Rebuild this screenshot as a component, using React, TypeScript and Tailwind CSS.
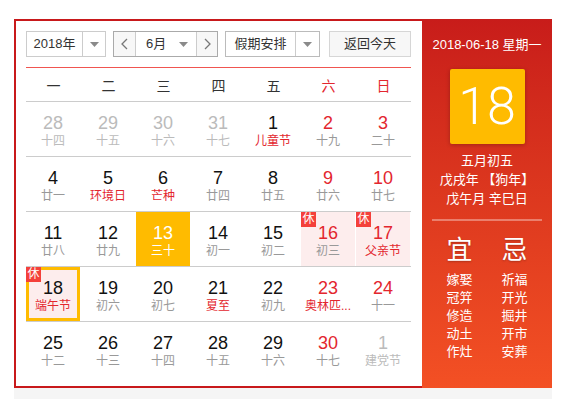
import React from "react";

type Day = {
  d: number;
  l: string;
  muted?: boolean; // 非当月
  red?: boolean; // 周末/节假日数字
  lred?: boolean; // 农历/节日红字
  rest?: boolean; // 休
  today?: boolean;
  sel?: boolean;
};

const weeks: Day[][] = [
  [
    { d: 28, l: "十四", muted: true },
    { d: 29, l: "十五", muted: true },
    { d: 30, l: "十六", muted: true },
    { d: 31, l: "十七", muted: true },
    { d: 1, l: "儿童节", lred: true },
    { d: 2, l: "十九", red: true },
    { d: 3, l: "二十", red: true },
  ],
  [
    { d: 4, l: "廿一" },
    { d: 5, l: "环境日", lred: true },
    { d: 6, l: "芒种", lred: true },
    { d: 7, l: "廿四" },
    { d: 8, l: "廿五" },
    { d: 9, l: "廿六", red: true },
    { d: 10, l: "廿七", red: true },
  ],
  [
    { d: 11, l: "廿八" },
    { d: 12, l: "廿九" },
    { d: 13, l: "三十", sel: true },
    { d: 14, l: "初一" },
    { d: 15, l: "初二" },
    { d: 16, l: "初三", red: true, rest: true },
    { d: 17, l: "父亲节", red: true, lred: true, rest: true },
  ],
  [
    { d: 18, l: "端午节", lred: true, rest: true, today: true },
    { d: 19, l: "初六" },
    { d: 20, l: "初七" },
    { d: 21, l: "夏至", lred: true },
    { d: 22, l: "初九" },
    { d: 23, l: "奥林匹...", red: true, lred: true },
    { d: 24, l: "十一", red: true },
  ],
  [
    { d: 25, l: "十二" },
    { d: 26, l: "十三" },
    { d: 27, l: "十四" },
    { d: 28, l: "十五" },
    { d: 29, l: "十六" },
    { d: 30, l: "十七", red: true },
    { d: 1, l: "建党节", muted: true },
  ],
];

const yi = ["嫁娶", "冠笄", "修造", "动土", "作灶"];
const ji = ["祈福", "开光", "掘井", "开市", "安葬"];

function Caret() {
  return (
    <svg width="9" height="5" viewBox="0 0 9 5">
      <path d="M0 0 L9 0 L4.5 5 Z" fill="#8a8a8a" />
    </svg>
  );
}

function Chevron({ right }: { right?: boolean }) {
  return (
    <svg width="7" height="12" viewBox="0 0 7 12">
      <path
        d={right ? "M1 1 L6 6 L1 11" : "M6 1 L1 6 L6 11"}
        fill="none"
        stroke="#777"
        strokeWidth="1.3"
      />
    </svg>
  );
}

function Cell({ day }: { day: Day }) {
  let bg = "";
  if (day.sel) bg = "bg-[#ffbb00]";
  else if (day.rest) bg = "bg-[#fdeded]";

  let numColor = "text-[#111]";
  if (day.muted) numColor = "text-[#bbb]";
  else if (day.sel) numColor = "text-white";
  else if (day.red) numColor = "text-[#e3262e]";

  let lunarColor = "text-[#999]";
  if (day.muted) lunarColor = "text-[#bbb]";
  else if (day.sel) lunarColor = "text-white";
  else if (day.lred) lunarColor = "text-[#e3262e]";

  return (
    <div className="w-[55px] h-[54px] pr-[1px]">
      <div
        className={`relative h-full flex flex-col items-center ${bg} ${
          day.today ? "border-[3px] border-[#ffbb00] pt-[8px]" : "pt-[11px]"
        }`}
      >
        {day.rest && (
          <div
            className={`absolute ${
              day.today ? "-left-[3px] -top-[3px]" : "left-0 top-0"
            } w-[15px] h-[15px] bg-[#f4403a] text-white text-[12px] leading-[15px] text-center`}
          >
            休
          </div>
        )}
        <div className={`text-[18px] leading-[20px] ${numColor}`}>{day.d}</div>
        <div className={`text-[12px] leading-[16px] whitespace-nowrap ${lunarColor}`}>
          {day.l}
        </div>
      </div>
    </div>
  );
}

export default function App() {
  return (
    <div
      className="w-[569px] h-[399px] bg-white pt-[19px] pl-[14px]"
      style={{ fontFamily: '"Liberation Sans", "Noto Sans CJK SC", sans-serif' }}
    >
      <div className="flex w-[538px] h-[369px]">
        {/* 左: 日历 */}
        <div className="w-[408px] h-full border-2 border-r-0 border-[#c8191b] bg-white px-[10px] pt-[10px]">
          {/* 工具栏 */}
          <div className="flex h-[26px] text-[13px] text-[#333]">
            <div className="flex w-[80px] border border-[#ccc]">
              <div className="w-[55px] flex items-center justify-center">2018年</div>
              <div className="flex-1 border-l border-[#ccc] flex items-center justify-center">
                <Caret />
              </div>
            </div>
            <div className="flex w-[105px] ml-[7px] border border-[#aaa]">
              <div className="w-[22px] bg-[#f7f7f7] border-r border-[#ccc] flex items-center justify-center">
                <Chevron />
              </div>
              <div className="w-[60px] flex items-center pl-[10px] gap-[13px]">
                <span>6月</span>
                <Caret />
              </div>
              <div className="flex-1 bg-[#f7f7f7] border-l border-[#ccc] flex items-center justify-center">
                <Chevron right />
              </div>
            </div>
            <div className="flex w-[95px] ml-[7px] border border-[#bbb]">
              <div className="w-[69px] flex items-center justify-center">假期安排</div>
              <div className="flex-1 border-l border-[#ccc] flex items-center justify-center">
                <Caret />
              </div>
            </div>
            <div className="w-[82px] ml-[9px] border border-[#d6d6d6] bg-[#f7f7f7] flex items-center justify-center">
              返回今天
            </div>
          </div>

          <div className="mt-[10px] h-px w-[385px] bg-[#f05550]" />

          {/* 星期 */}
          <div className="grid grid-cols-7 w-[385px] h-[34px] border-b border-[#ccc] text-[14px] text-[#333]">
            {["一", "二", "三", "四", "五", "六", "日"].map((w, i) => (
              <div
                key={w}
                className={`flex items-center justify-center pt-[3px] ${
                  i >= 5 ? "text-[#e3262e]" : ""
                }`}
              >
                {w}
              </div>
            ))}
          </div>

          {/* 日期 */}
          <div className="w-[385px]" style={{ fontFamily: '"Liberation Sans", "Noto Sans CJK SC", sans-serif' }}>
            {weeks.map((wk, i) => (
              <div
                key={i}
                className={`flex ${i < weeks.length - 1 ? "border-b border-[#ccc]" : ""}`}
              >
                {wk.map((d, j) => (
                  <Cell key={j} day={d} />
                ))}
              </div>
            ))}
          </div>
        </div>

        {/* 右: 今日详情 */}
        <div className="w-[130px] h-full bg-gradient-to-b from-[#c81c1a] to-[#f35024] text-white flex flex-col items-center">
          <div className="mt-[18px] text-[13px] leading-[16px]">2018-06-18 星期一</div>
          <div className="mt-[16px] w-[75px] h-[75px] rounded-[2px] bg-[#ffbb00] shadow-[0_1px_4px_rgba(0,0,0,0.25)] flex items-center justify-center">
            <span
              className="text-[52px] font-light leading-none"
              style={{ fontFamily: 'Roboto, "Liberation Sans", sans-serif' }}
            >
              18
            </span>
          </div>
          <div className="mt-[7px] text-[13px] leading-[19px] text-center">
            <div>五月初五</div>
            <div>戊戌年 【狗年】</div>
            <div>戊午月 辛巳日</div>
          </div>
          <div className="mt-[11px] w-[110px] h-[2px] bg-white/35" />
          <div className="mt-[14px] flex gap-[29px]">
            {[
              { t: "宜", list: yi },
              { t: "忌", list: ji },
            ].map((c) => (
              <div key={c.t} className="flex flex-col items-center">
                <div className="text-[26px] leading-[30px] [text-shadow:0_1px_2px_rgba(0,0,0,0.25)]">
                  {c.t}
                </div>
                <div className="mt-[6px] text-[13px] leading-[18px] flex flex-col items-center">
                  {c.list.map((s) => (
                    <div key={s}>{s}</div>
                  ))}
                </div>
              </div>
            ))}
          </div>
        </div>
      </div>
      <div className="w-[538px] h-[11px] bg-[#f5f5f5]" />
    </div>
  );
}
